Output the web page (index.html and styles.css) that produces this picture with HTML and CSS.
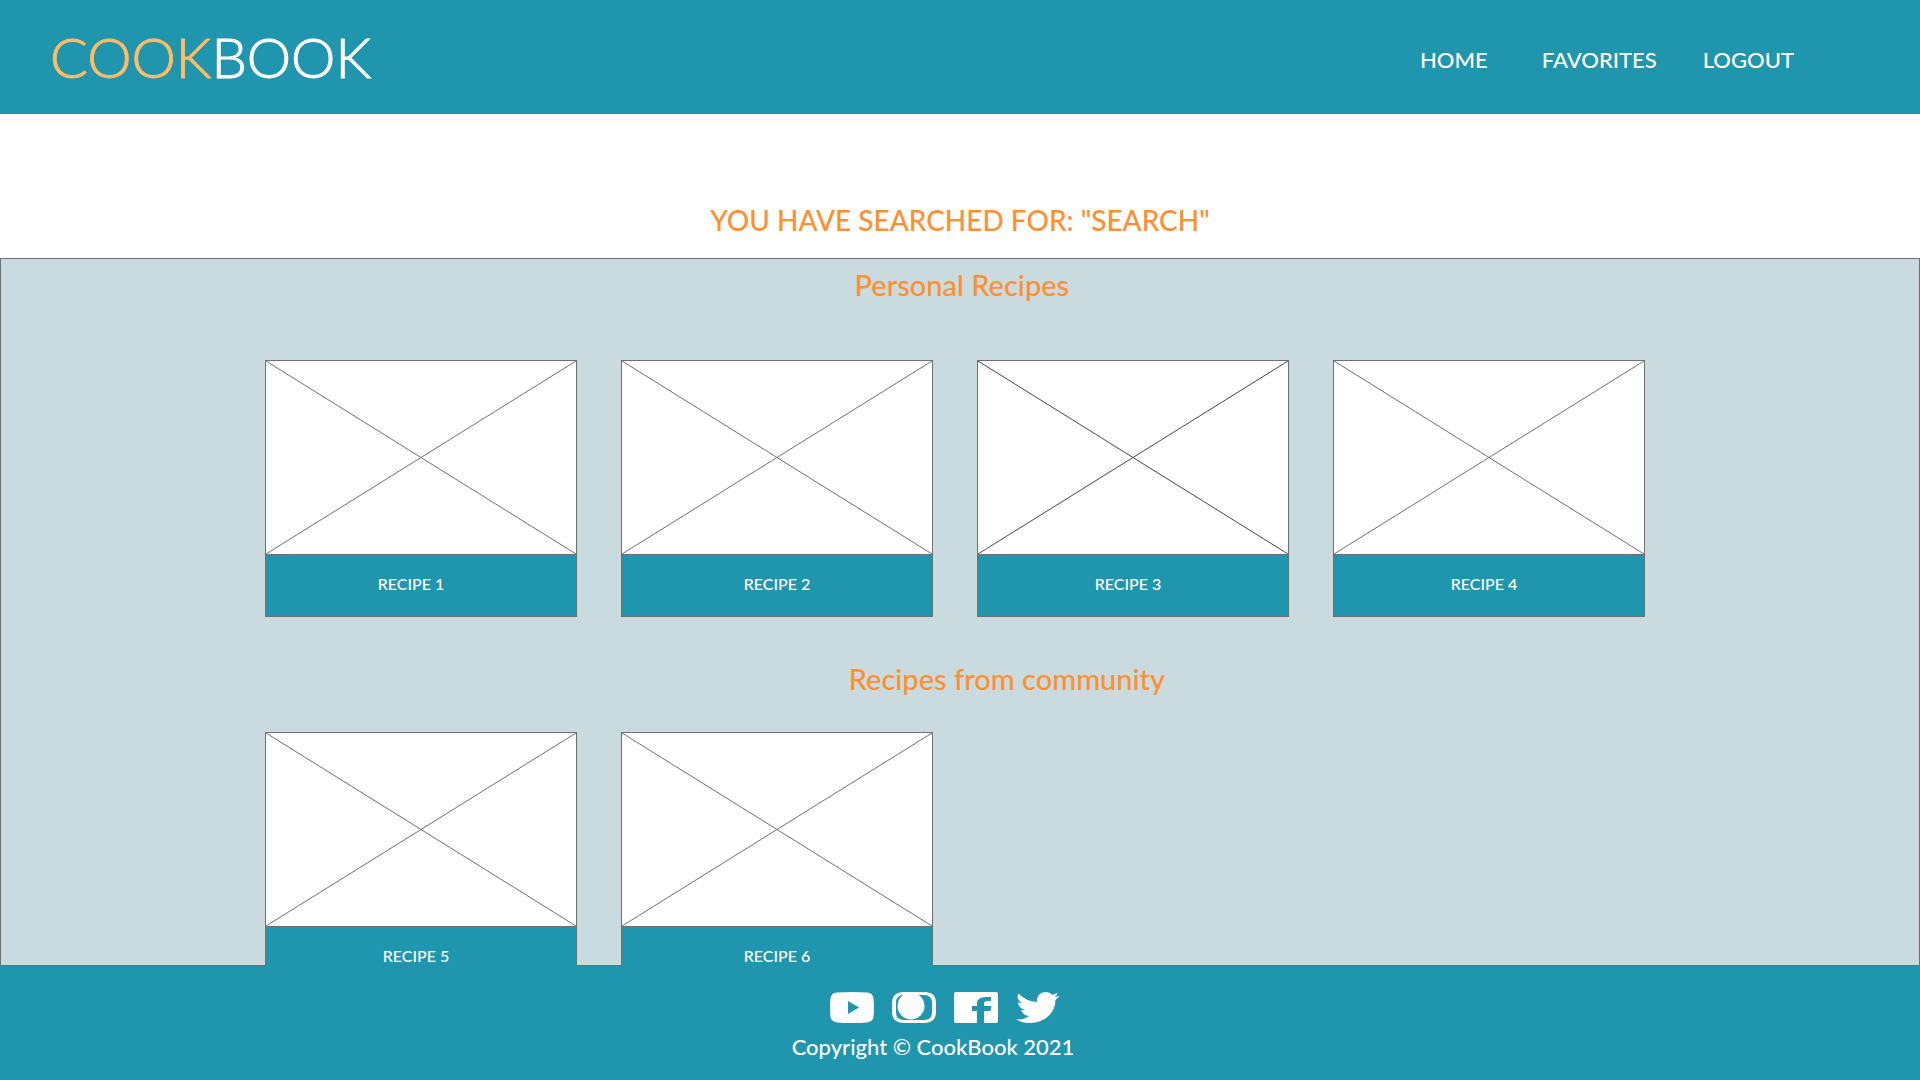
FILE: index.html
```html
<!DOCTYPE html>
<html lang="en">
<head>
<meta charset="utf-8">
<meta name="viewport" content="width=device-width, initial-scale=1">
<title>CookBook – Search</title>
<link rel="stylesheet" href="styles.css">
</head>
<body>
<header class="header">
  <a class="logo" href="#"><span class="logo-accent">COOK</span>BOOK</a>
  <nav class="nav">
    <a class="nav-link nav-home" href="#">HOME</a>
    <a class="nav-link" href="#">FAVORITES</a>
    <a class="nav-link" href="#">LOGOUT</a>
  </nav>
</header>
<main class="main">
  <h1 class="title">YOU HAVE SEARCHED FOR: "SEARCH"</h1>
  <section class="results">
    <h2 class="heading heading-personal">Personal Recipes</h2>
    <div class="grid grid-personal">
      <article class="card">
        <svg class="photo" viewBox="0 0 310 193" preserveAspectRatio="none"><path d="M0 0L310 193M310 0L0 193"/></svg>
        <h3 class="name name-first">RECIPE 1</h3>
      </article>
      <article class="card">
        <svg class="photo" viewBox="0 0 310 193" preserveAspectRatio="none"><path d="M0 0L310 193M310 0L0 193"/></svg>
        <h3 class="name">RECIPE 2</h3>
      </article>
      <article class="card">
        <svg class="photo photo-dark" viewBox="0 0 310 193" preserveAspectRatio="none"><path d="M0 0L310 193M310 0L0 193"/></svg>
        <h3 class="name name-shifted">RECIPE 3</h3>
      </article>
      <article class="card">
        <svg class="photo" viewBox="0 0 310 193" preserveAspectRatio="none"><path d="M0 0L310 193M310 0L0 193"/></svg>
        <h3 class="name name-shifted">RECIPE 4</h3>
      </article>
    </div>
    <h2 class="heading">Recipes from community</h2>
    <div class="grid">
      <article class="card">
        <svg class="photo" viewBox="0 0 310 193" preserveAspectRatio="none"><path d="M0 0L310 193M310 0L0 193"/></svg>
        <h3 class="name name-shifted">RECIPE 5</h3>
      </article>
      <article class="card">
        <svg class="photo" viewBox="0 0 310 193" preserveAspectRatio="none"><path d="M0 0L310 193M310 0L0 193"/></svg>
        <h3 class="name">RECIPE 6</h3>
      </article>
    </div>
  </section>
</main>
<footer class="footer">
  <div class="social">
    <a class="social-link" href="#" aria-label="YouTube"><svg class="icon" viewBox="0 0 44 31"><path fill-rule="evenodd" d="M7 .6Q22-.6 37 .6Q43 1 43.600 7Q44.400 15.500 43.600 24Q43 30 37 30.400Q22 31.600 7 30.400Q1 30 .4 24Q-.4 15.500 .4 7Q1 1 7 .6ZM18 9V22L29 15.500Z"/></svg></a>
    <a class="social-link" href="#" aria-label="Instagram"><svg class="icon" viewBox="0 0 44 31"><path fill-rule="evenodd" d="M12 0H32Q44 0 44 11V20Q44 31 32 31H12Q0 31 0 20V11Q0 0 12 0ZM12 3Q4 3 4 11V20Q4 28 12 28H32Q40 28 40 20V11Q40 3 32 3Z"/><ellipse cx="19" cy="14" rx="13.500" ry="13.500"/></svg></a>
    <a class="social-link" href="#" aria-label="Facebook"><svg class="icon" viewBox="0 0 44 31"><path d="M2 0H42Q44 0 44 2V29Q44 31 42 31H30V19H36.500L37.500 14H30V11.500Q30 9 33 9H37V5H32Q23 5 23 11.500V14H18V19H23V31H2Q0 31 0 29V2Q0 0 2 0Z"/></svg></a>
    <a class="social-link" href="#" aria-label="Twitter"><svg class="icon" viewBox="0 0 44 31"><path d="M2.500 1.500Q10 9.500 21.300 10C20 4 24.500 0 30 0Q33.500 0 36.200 2.700Q39 2.200 41.500 .8Q41 3.500 38.500 5Q41 4.700 43.500 3.700Q42 6.200 39.300 8C40 20 29 31 14 31Q6 31 .2 27.500Q7.500 28 13 24Q7 23.500 5 18Q7 18.400 9 17.800Q2.200 16 2 10.200Q4 11.200 6 11.300Q-.5 6.500 2.500 1.500Z"/></svg></a>
  </div>
  <p class="copyright">Copyright © CookBook 2021</p>
</footer>
</body>
</html>
```
FILE: styles.css
```css
* {
  box-sizing: border-box;
}

body {
  display: flex;
  flex-direction: column;
  height: 100vh;
  margin: 0;
  background: #fff;
  font-family: Lato, "Open Sans", sans-serif;
  font-weight: 500;
}

h1, h2, h3, p {
  margin: 0;
  font-weight: 500;
}

a {
  color: inherit;
  text-decoration: none;
}

.header {
  display: flex;
  flex: none;
  align-items: center;
  justify-content: space-between;
  height: 114px;
  padding: 0 126px 0 50px;
  background: #1f95ae;
  color: #fff;
}

.logo {
  font-size: 56px;
  font-weight: 300;
  line-height: 60px;
  -webkit-text-stroke: 1px currentColor;
}

.logo-accent {
  color: #ffbc64;
}

.nav {
  display: flex;
  padding-top: 6px;
  gap: 46px;
  font-size: 22px;
  line-height: 28px;
}

.nav-home {
  padding-right: 8px;
}

.main {
  display: flex;
  flex: 1;
  flex-direction: column;
  min-height: 0;
  overflow: hidden;
}

.title {
  flex: none;
  padding: 88px 16px 20px;
  color: #ff8f30;
  font-size: 28px;
  line-height: 36px;
  text-align: center;
}

.results {
  flex: 1;
  min-height: 0;
  padding-top: 8px;
  border: 1px solid #707070;
  background: #cadbdf;
}

.heading {
  padding-left: 44.200%;
  color: #ff8f30;
  font-size: 29px;
  line-height: 36px;
}

.heading-personal {
  padding-left: 44.500%;
}

.grid {
  display: grid;
  grid-template-columns: repeat(4, 1fr);
  gap: 44px;
  padding: 35px 274px 0 264px;
}

.grid-personal {
  padding-top: 57px;
  padding-bottom: 44px;
}

.card {
  display: flex;
  flex-direction: column;
  height: 257px;
  border: 1px solid #707070;
  background: #1f95ae;
}

.photo {
  display: block;
  width: 100%;
  height: 194px;
  border-bottom: 1px solid #707070;
  background: #fff;
  fill: none;
  stroke: #707070;
}

.photo-dark {
  stroke: #484848;
}

.name {
  padding-top: 19px;
  color: #fff;
  font-size: 16px;
  line-height: 20px;
  text-align: center;
}

.name-shifted {
  padding-right: 10px;
}

.name-first {
  padding-right: 20px;
}

.footer {
  display: flex;
  flex: none;
  flex-direction: column;
  align-items: center;
  height: 114px;
  padding-top: 26px;
  background: #1f95ae;
  color: #fff;
}

.social {
  display: flex;
  gap: 18px;
  margin-right: 30px;
}

.icon {
  display: block;
  width: 44px;
  height: 31px;
  fill: #fff;
}

.copyright {
  margin-top: 10px;
  margin-right: 54px;
  font-size: 22px;
  line-height: 28px;
}
```
